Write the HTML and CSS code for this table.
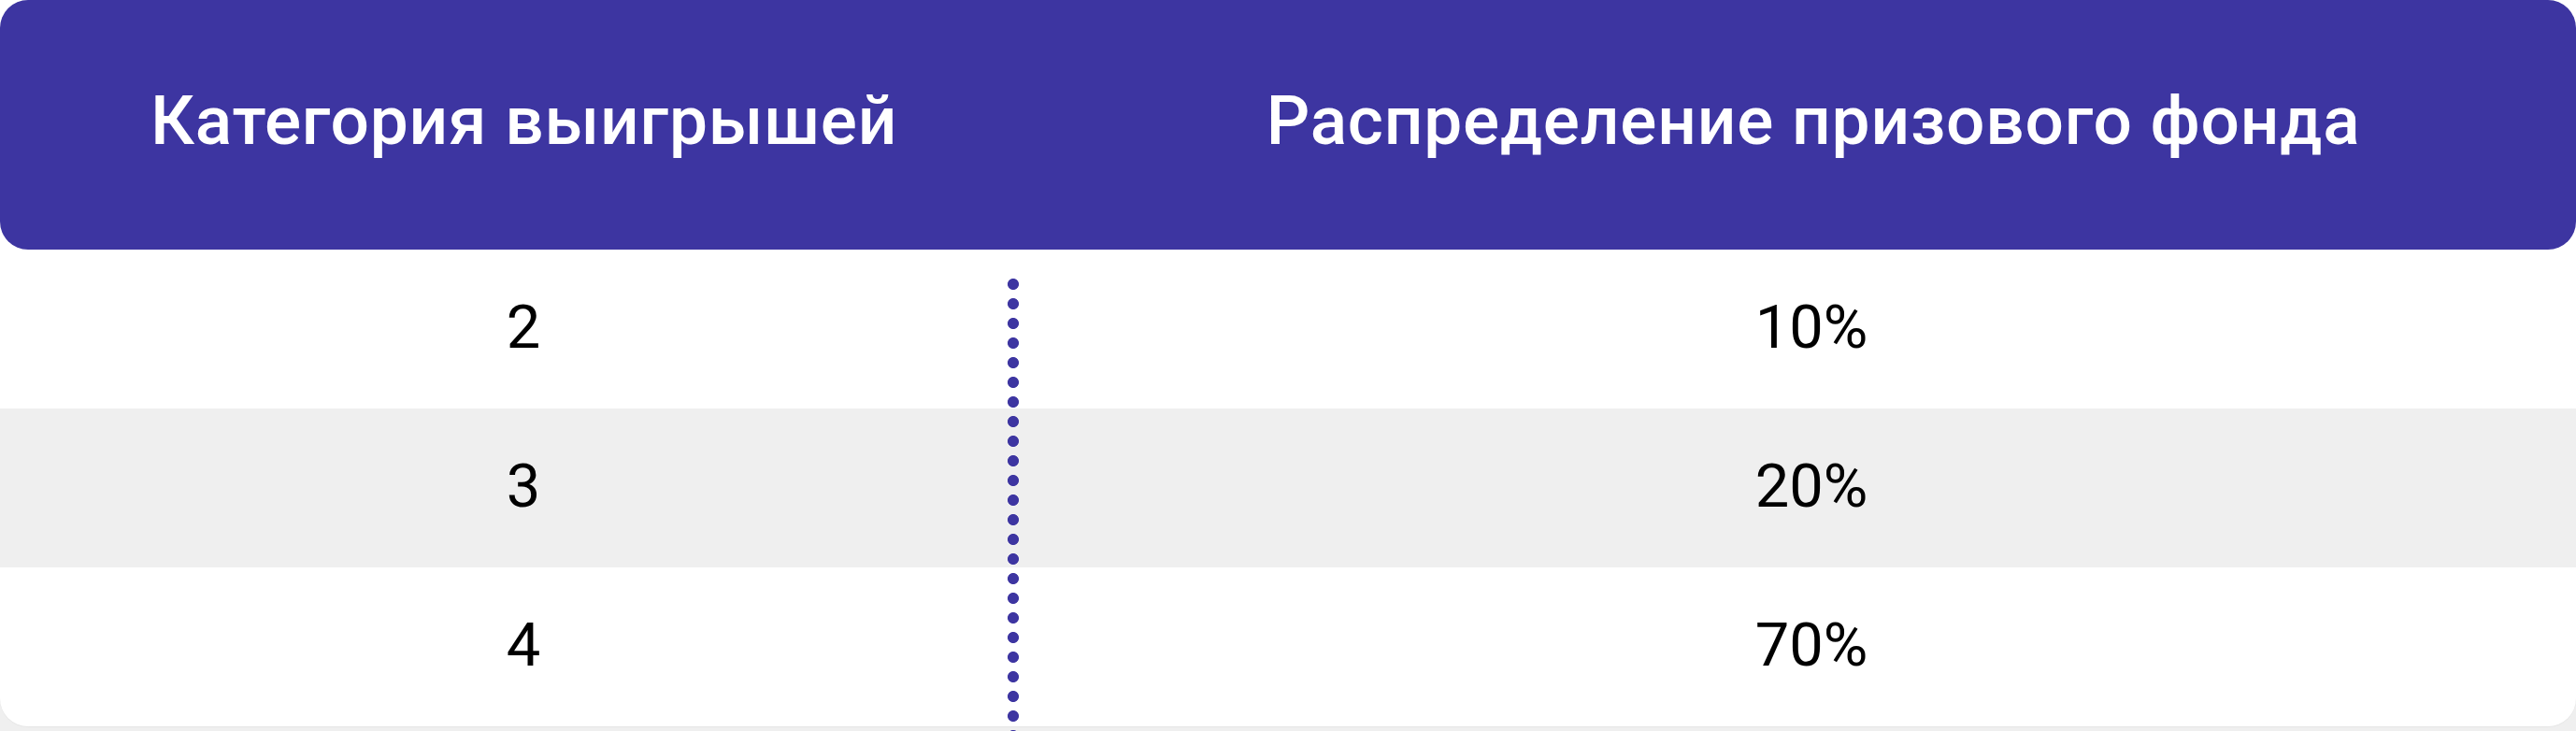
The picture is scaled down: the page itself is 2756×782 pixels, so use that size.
FILE: index.html
```html
<!DOCTYPE html>
<html lang="ru">
<head>
<meta charset="utf-8">
<title>Распределение призового фонда</title>
<link rel="stylesheet" href="styles.css">
</head>
<body>
<div class="prize-table">
  <div class="head">
    <div class="head-cell head-cell--first">Категория выигрышей</div>
    <div class="head-cell">Распределение призового фонда</div>
  </div>
  <div class="row">
    <div class="cell">2</div>
    <div class="cell">10%</div>
  </div>
  <div class="row row--alt">
    <div class="cell">3</div>
    <div class="cell">20%</div>
  </div>
  <div class="row row--last">
    <div class="cell">4</div>
    <div class="cell">70%</div>
  </div>
  <div class="row row--alt row--tail"></div>
  <div class="divider"></div>
</div>
</body>
</html>
```
FILE: styles.css
```css
html, body {
  margin: 0;
  padding: 0;
  background: #ffffff;
  overflow: hidden;
}

.prize-table {
  position: relative;
  width: 2756px;
  height: 782px;
  overflow: hidden;
  font-family: Roboto, "Noto Sans", sans-serif;
}

.head {
  display: grid;
  grid-template-columns: 1124px 1fr;
  height: 267px;
  background: #3d35a1;
  border-radius: 30px;
  color: #ffffff;
  font-size: 73px;
  line-height: 84px;
  font-weight: 500;
  letter-spacing: 0.8px;
}

.head-cell {
  padding-top: 87px;
  text-align: center;
}

.head-cell--first {
  text-align: left;
  padding-left: 161px;
}

.row {
  display: grid;
  grid-template-columns: 1120px 1fr;
  height: 170px;
  background: #ffffff;
  color: #000000;
  font-size: 65px;
  line-height: 77px;
  font-weight: 400;
}

.row:first-of-type {
  height: 171px;
}

.row--alt {
  background: #efefef;
}

.row--last {
  position: relative;
  border-radius: 0 0 30px 30px;
  box-shadow: 0 1px 1px rgba(0, 0, 0, 0.04);
  z-index: 1;
}

.row--tail {
  height: 40px;
  margin-top: -30px;
}

.cell {
  padding-top: 45px;
  text-align: center;
}

.divider {
  position: absolute;
  left: 1078px;
  top: 298px;
  bottom: 0;
  width: 12px;
  z-index: 2;
  background-image: radial-gradient(circle at 6px 6px, #3d35a1 5.6px, rgba(61, 53, 161, 0) 6.4px);
  background-size: 12px 21px;
  background-repeat: repeat-y;
}
```
